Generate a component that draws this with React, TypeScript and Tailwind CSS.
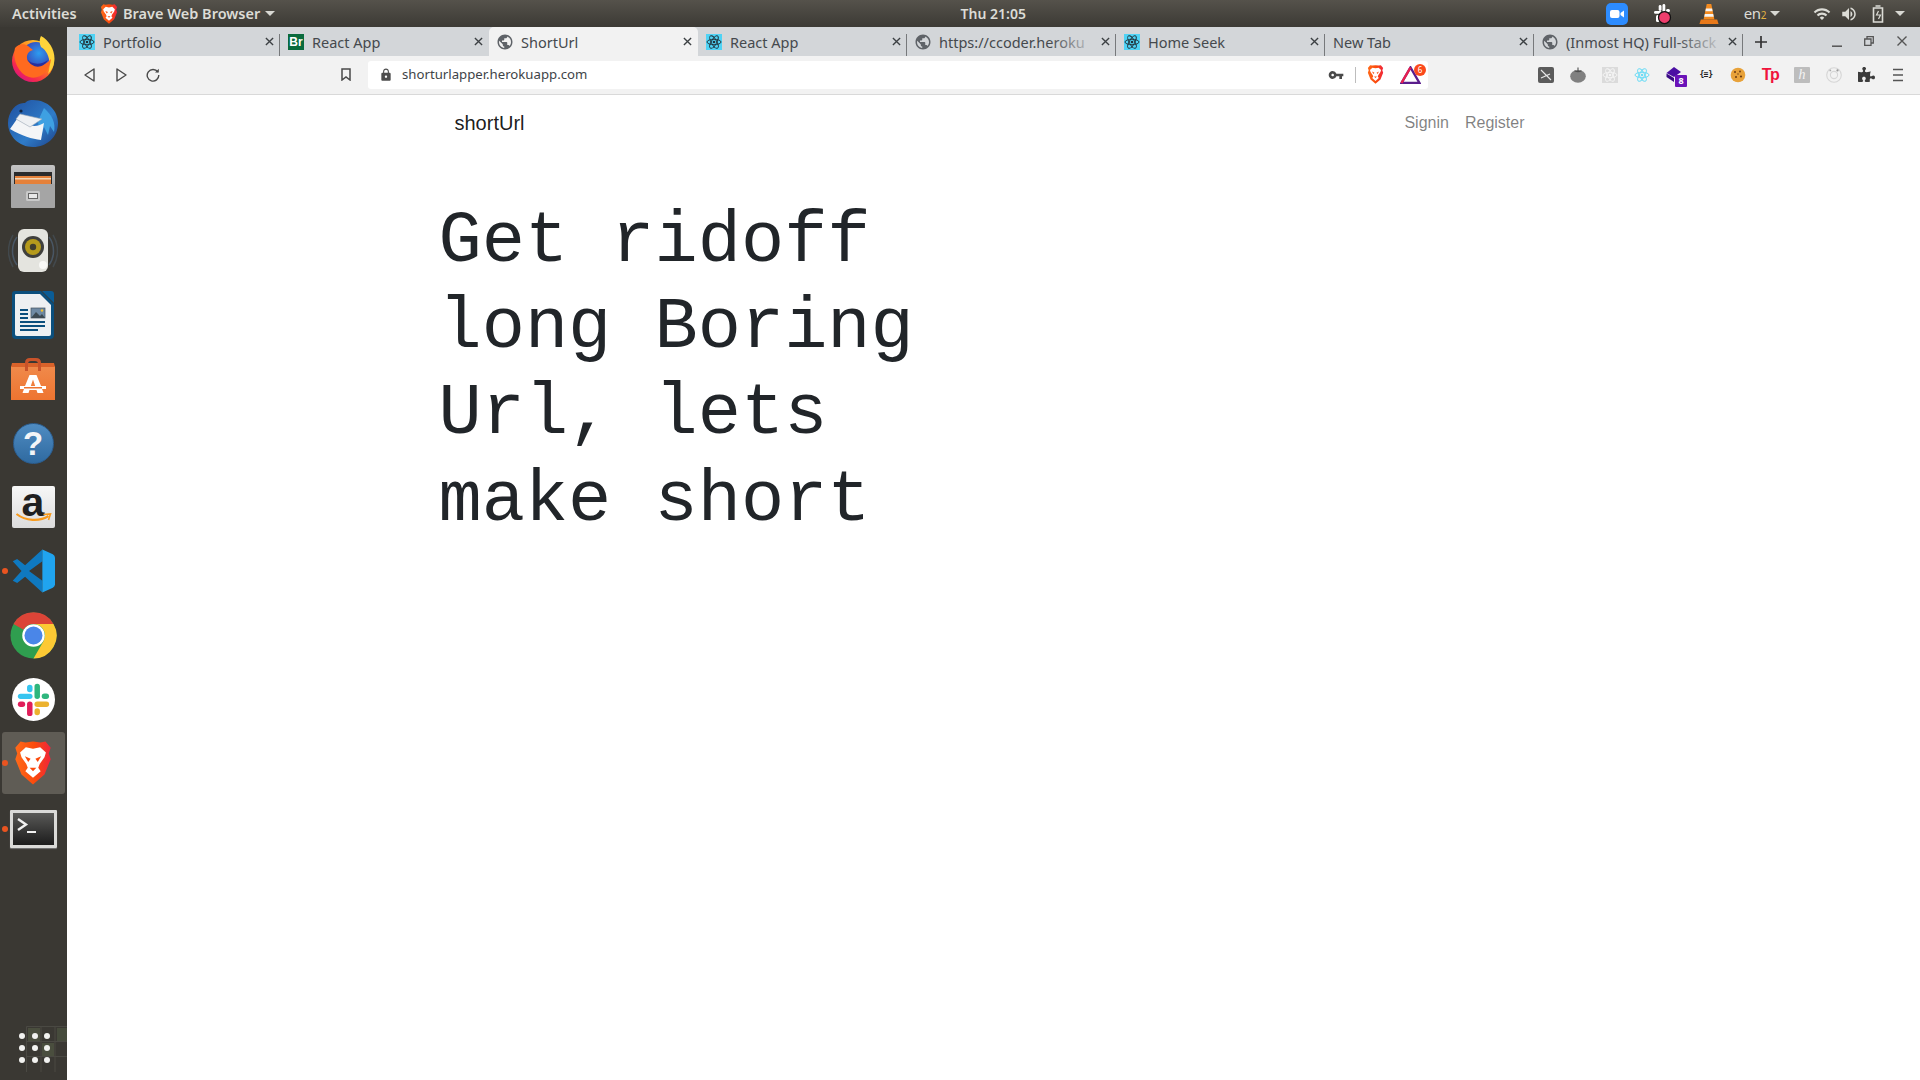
import React from "react";
import { FaPuzzlePiece } from "react-icons/fa";
import { MdVpnKey, MdLock, MdPublic, MdWifi, MdVolumeUp } from "react-icons/md";

const uiFont = "font-['Noto_Sans','Open_Sans',sans-serif]";

function BraveLogo({ className }: { className?: string }) {
  return (
    <svg viewBox="0 0 40 46" className={className}>
      <defs>
        <linearGradient id="brv" x1="0" y1="0" x2="1" y2="0">
          <stop offset="0" stopColor="#ff6a1a" />
          <stop offset="0.55" stopColor="#fb4a0c" />
          <stop offset="1" stopColor="#f0243c" />
        </linearGradient>
      </defs>
      <path d="M20 0.5 L28 1.5 L33 0.5 L38.5 7 L36.5 13 L38.5 19 L32 35 L20 45.5 L8 35 L1.5 19 L3.5 13 L1.5 7 L7 0.5 L12 1.5 Z" fill="url(#brv)" />
      <path d="M6.5 12 L12.5 6.5 L20 8 L27.5 6.5 L33.5 12 L32 17 L27 24 L25.5 28 L28 31.5 L20 38.5 L12 31.5 L14.5 28 L13 24 L8 17 Z" fill="#fff" />
      <path d="M11.5 16 L17.5 18.5 L15 22 Z M28.5 16 L22.5 18.5 L25 22 Z M16.5 28 L23.5 28 L20 31.5 Z" fill="#fb4a0c" />
    </svg>
  );
}

function Atom({ color, width = 1, className }: { color: string; width?: number; className?: string }) {
  return (
    <svg viewBox="0 0 16 16" className={className} fill="none" stroke={color} strokeWidth={width}>
      <ellipse cx="8" cy="8" rx="7" ry="2.7" />
      <ellipse cx="8" cy="8" rx="7" ry="2.7" transform="rotate(60 8 8)" />
      <ellipse cx="8" cy="8" rx="7" ry="2.7" transform="rotate(120 8 8)" />
      <circle cx="8" cy="8" r="1.3" fill={color} stroke="none" />
    </svg>
  );
}

function ReactFav() {
  return (
    <span className="flex h-4 w-4 shrink-0 items-center justify-center bg-[#4fd3f5]">
      <Atom color="#20323a" width={0.9} className="h-4 w-4" />
    </span>
  );
}

function BrFav() {
  return (
    <span className="flex h-4 w-4 shrink-0 items-center justify-center bg-[#0a6b3d] font-['Liberation_Sans',sans-serif] text-[12px] leading-none font-bold text-white">
      Br
    </span>
  );
}

function Globe() {
  return <MdPublic className="h-[18px] w-[18px] shrink-0 -ml-px text-[#5f6368]" />;
}

const tabs: { title: string; fav: React.ReactNode; active?: boolean; fade?: boolean; noSep?: boolean }[] = [
  { title: "Portfolio", fav: <ReactFav /> },
  { title: "React App", fav: <BrFav />, noSep: true },
  { title: "ShortUrl", fav: <Globe />, active: true, noSep: true },
  { title: "React App", fav: <ReactFav /> },
  { title: "https://ccoder.heroku", fav: <Globe />, fade: true },
  { title: "Home Seek", fav: <ReactFav /> },
  { title: "New Tab", fav: null },
  { title: "(Inmost HQ) Full-stack", fav: <Globe />, fade: true },
];

function Tab({ title, fav, active, fade, noSep }: (typeof tabs)[number]) {
  return (
    <div className={`relative flex h-full w-[209px] shrink-0 items-center pl-2 ${active ? "rounded-t-[5px] bg-[#f2f2f2]" : ""}`}>
      {fav && <span className="mr-2 flex w-4 shrink-0 items-center justify-center">{fav}</span>}
      <div className={`relative text-[14.5px] leading-[20px] whitespace-nowrap ${fav ? "w-[160px]" : "w-[184px]"} text-[#45494d]`}>
        {title}
        {fade && <span className="absolute top-0 left-[110px] h-full w-[50px] bg-gradient-to-r from-transparent to-[#d3d6d9]" />}
      </div>
      <svg viewBox="0 0 10 10" className="absolute top-[10px] left-[194px] h-[9px] w-[9px]" stroke="#3c4043" strokeWidth="1.5">
        <path d="M1 1 L9 9 M9 1 L1 9" />
      </svg>
      {!noSep && !active && <span className="absolute top-[7px] right-0 h-[22px] w-px bg-[#77797b]" />}
    </div>
  );
}

function Firefox() {
  return (
    <svg viewBox="0 0 46 46" className="h-[46px] w-[46px]">
      <defs>
        <linearGradient id="ffa" x1="0.85" y1="0.1" x2="0.2" y2="0.95">
          <stop offset="0" stopColor="#ffcf2e" />
          <stop offset="0.45" stopColor="#ff7a1f" />
          <stop offset="0.8" stopColor="#f5284f" />
          <stop offset="1" stopColor="#d9157f" />
        </linearGradient>
        <radialGradient id="ffb" cx="0.6" cy="0.4" r="0.7">
          <stop offset="0" stopColor="#2d9cf0" />
          <stop offset="1" stopColor="#3a2ea8" />
        </radialGradient>
      </defs>
      <circle cx="23" cy="25" r="21" fill="url(#ffa)" />
      <circle cx="26" cy="20" r="14" fill="url(#ffb)" />
      <path d="M31 0 C44 7 50 26 38 38 C42 26 38 15 31 11 C29 7 29.5 3 31 0 Z" fill="#ffd43a" />
      <path d="M5 12 C8 8 14 7 18 10 L23 14 C17 15 15 22 19 26 C24 31 34 31 41 23 C40 36 29 44 19 41 C9 38 2 24 5 12 Z" fill="#ff6a1f" />
      <path d="M17 23 C21 29 32 29 38 24 C33 33 22 33 17 23 Z" fill="#2a2f9c" />
    </svg>
  );
}

function Thunderbird() {
  return (
    <svg viewBox="0 0 50 48" className="h-[48px] w-[50px]">
      <defs>
        <linearGradient id="tb" x1="0" y1="0" x2="1" y2="1">
          <stop offset="0" stopColor="#1f4f9e" />
          <stop offset="0.6" stopColor="#2f7cc9" />
          <stop offset="1" stopColor="#1c3f86" />
        </linearGradient>
      </defs>
      <path d="M25 1 C40 1 50 12 50 24 C50 38 39 48 25 48 C11 48 0 37 0 24 C0 12 9 3 17 4 C20 1 22 1 25 1 Z" fill="url(#tb)" />
      <path d="M36 9 C44 16 48 24 46 33 L42 27 L40 36 L36 28 L32 40 L30 22 Z" fill="#3ea0e2" />
      <path d="M9 20 C20 26 26 30 36 24 L33 41 C24 40 14 37 2 30 Z" fill="#f4f5f7" />
      <path d="M12 15 L34 20 L22 28 L8 20 Z" fill="#eef0f3" stroke="#9aa6b4" strokeWidth="0.6" />
      <circle cx="13" cy="12" r="1.6" fill="#10233f" />
    </svg>
  );
}

function FilesIcon() {
  return (
    <svg viewBox="0 0 44 44" className="h-[44px] w-[44px]">
      <defs>
        <linearGradient id="fl" x1="0" y1="0" x2="0" y2="1">
          <stop offset="0" stopColor="#c4c4c4" />
          <stop offset="1" stopColor="#8f8f8f" />
        </linearGradient>
      </defs>
      <rect x="0" y="0" width="44" height="43" rx="2" fill="url(#fl)" />
      <rect x="3" y="7" width="38" height="14" fill="#2b2b2b" />
      <rect x="4" y="11" width="36" height="8" fill="#e5813a" />
      <rect x="4" y="13" width="36" height="1.5" fill="#f3d6b3" />
      <rect x="0" y="19" width="44" height="24" rx="1" fill="#a5a5a5" />
      <rect x="15" y="26" width="14" height="10" rx="1.5" fill="#c9c9c9" />
      <rect x="17" y="28" width="10" height="6" fill="#666" />
      <rect x="18" y="29" width="8" height="4" fill="#e8e8e8" />
    </svg>
  );
}

function RhythmIcon() {
  return (
    <svg viewBox="0 0 50 44" className="h-[44px] w-[50px]">
      <g fill="none" stroke="#56708c" strokeOpacity="0.55" strokeWidth="1.5">
        <path d="M9 8 C3 16 3 28 9 36" />
        <path d="M41 8 C47 16 47 28 41 36" />
        <path d="M5 6 C-1 16 -1 28 5 38" strokeOpacity="0.3" />
        <path d="M45 6 C51 16 51 28 45 38" strokeOpacity="0.3" />
      </g>
      <rect x="10" y="0" width="30" height="43" rx="6" fill="#e4e4df" />
      <circle cx="25" cy="18" r="11" fill="#3f3f3c" />
      <circle cx="25" cy="18" r="8" fill="#b59a1c" />
      <circle cx="25" cy="18" r="3.2" fill="#3f3d2e" />
      <circle cx="35" cy="36" r="4" fill="#f8f8f6" />
    </svg>
  );
}

function WriterIcon() {
  return (
    <svg viewBox="0 0 42 48" className="h-[48px] w-[42px]">
      <path d="M3 0 H29 L42 13 V44 Q42 48 38 48 H4 Q0 48 0 44 V3 Q0 0 3 0 Z" fill="#0b4f7d" />
      <path d="M30 0 H39 Q42 0 42 3 V12 Z" fill="#0a5c96" />
      <path d="M4 3 H28 L39 14 V43 Q39 45 37 45 H5 Q3 45 3 43 V4 Q3 3 4 3 Z" fill="#edf0f2" />
      <rect x="8" y="18" width="8" height="2" fill="#0b4f7d" />
      <rect x="8" y="22" width="8" height="2" fill="#0b4f7d" />
      <rect x="8" y="26" width="8" height="2" fill="#0b4f7d" />
      <rect x="8" y="30" width="25" height="2" fill="#0b4f7d" />
      <rect x="8" y="34" width="25" height="2" fill="#0b4f7d" />
      <rect x="8" y="38" width="18" height="2" fill="#0b4f7d" />
      <rect x="19" y="17" width="14" height="10" fill="#6f8aa3" stroke="#44525e" strokeWidth="0.7" />
      <path d="M19 27 L24 21 L28 25 L30 23 L33 27 Z" fill="#3d4a52" />
      <circle cx="30" cy="19.5" r="1.2" fill="#f1c232" />
    </svg>
  );
}

function SoftwareIcon() {
  return (
    <svg viewBox="0 0 44 44" className="h-[44px] w-[44px]">
      <defs>
        <linearGradient id="sw" x1="0" y1="0" x2="0" y2="1">
          <stop offset="0" stopColor="#f08a4b" />
          <stop offset="1" stopColor="#ee7430" />
        </linearGradient>
      </defs>
      <path d="M0 9 H44 V43 H0 Z" fill="url(#sw)" />
      <path d="M1 6 H43 L44 10 H0 Z" fill="#d9622a" />
      <path d="M14 14 V6 Q14 1 19 1 H25 Q30 1 30 6 V14 H27 V7 Q27 4 24 4 H20 Q17 4 17 7 V14 Z" fill="#c9532a" />
      <path fillRule="evenodd" fill="#fff" d="M18.5 18 H25.5 L30 29 H35 V32 H31 L32.5 36 H26.5 L25.5 33 H18.5 L17.5 36 H11.5 L13 32 H9 V29 H14 Z M22 22.5 L19.8 29 H24.2 Z" />
      <rect x="13" y="30" width="18" height="1.5" fill="#ee7430" />
    </svg>
  );
}

function HelpIcon() {
  return (
    <div className="flex h-[41px] w-[41px] items-center justify-center rounded-full border border-[#2b5d8f] bg-gradient-to-b from-[#4f8cc2] to-[#2f6aa0] font-['Liberation_Sans',sans-serif] text-[33px] leading-none font-bold text-[#f2f5f8]">
      ?
    </div>
  );
}

function AmazonIcon() {
  return (
    <div className="relative flex h-[42px] w-[43px] justify-center rounded-[2px] bg-gradient-to-b from-[#f7f7f7] to-[#dcdcdc] font-['Liberation_Sans',sans-serif] text-[41px] leading-[32px] font-bold text-[#1f1f1f]">
      a
      <svg viewBox="0 0 36 10" className="absolute top-[27px] left-[3px] h-[10px] w-[37px]">
        <path d="M1 1 C10 8 24 9 33 3" fill="none" stroke="#f79a1c" strokeWidth="2.2" />
        <path d="M28 1.5 L35 1 L33 7" fill="none" stroke="#f79a1c" strokeWidth="1.6" />
      </svg>
    </div>
  );
}

function VSCode() {
  return (
    <svg viewBox="0 0 100 100" className="h-[44px] w-[44px]">
      <path d="M71.3 1 L32 37 L14 23 L4 28 L24 50 L4 72 L14 77 L32 63 L71.3 99 L71.3 72 L41 50 L71.3 28 Z" fill="#0f79c0" />
      <path d="M71.3 1 L95 12 Q100 15 100 20 V80 Q100 85 95 88 L71.3 99 Z" fill="#20a4ef" />
    </svg>
  );
}

function Chrome() {
  return (
    <svg viewBox="0 0 48 48" className="h-[47px] w-[47px]">
      <circle cx="24" cy="24" r="23.5" fill="#2f9e4f" />
      <path d="M3.6 12.2 A23.5 23.5 0 0 1 44.4 12.2 L24 12.2 A11.8 11.8 0 0 0 13.8 18 Z" fill="#db4437" />
      <path d="M44.4 12.2 A23.5 23.5 0 0 1 24 47.5 L34.2 29.9 A11.8 11.8 0 0 0 24 12.2 Z" fill="#fcc934" />
      <circle cx="24" cy="24" r="11.5" fill="#fff" />
      <circle cx="24" cy="24" r="9.2" fill="#4a86e8" />
    </svg>
  );
}

function Slack() {
  return (
    <svg viewBox="0 0 44 44" className="h-[43px] w-[43px]">
      <circle cx="22" cy="22" r="22" fill="#fff" />
      <rect x="6" y="16" width="15" height="5.6" rx="2.8" fill="#36c5f0" />
      <rect x="15.4" y="7" width="5.6" height="7.5" rx="2.8" fill="#36c5f0" />
      <rect x="23" y="6" width="5.6" height="15.6" rx="2.8" fill="#2eb67d" />
      <rect x="30.4" y="15.8" width="7.5" height="5.8" rx="2.8" fill="#2eb67d" />
      <rect x="23" y="24" width="15" height="5.6" rx="2.8" fill="#ecb22e" />
      <rect x="23" y="31" width="5.6" height="7" rx="2.8" fill="#ecb22e" />
      <rect x="15.4" y="24" width="5.6" height="15" rx="2.8" fill="#e01e5a" />
      <rect x="6" y="24" width="7.5" height="5.6" rx="2.8" fill="#e01e5a" />
    </svg>
  );
}

function Terminal() {
  return (
    <div className="flex h-[38px] w-[47px] rounded-[1px] border-[3px] border-[#dadad8] bg-gradient-to-b from-[#5a5a58] to-[#1d1d1d] p-[2px] shadow-[0_1px_1px_#777]">
      <svg viewBox="0 0 37 28" className="h-full w-full">
        <path d="M3 4 L11 9.5 L3 15" fill="none" stroke="#f1f1f1" strokeWidth="2.4" />
        <rect x="12" y="16" width="9" height="2" fill="#f1f1f1" />
      </svg>
    </div>
  );
}

function DockItem({ children, running, active, mt }: { children: React.ReactNode; running?: boolean; active?: boolean; mt?: boolean }) {
  return (
    <div className={`relative flex h-16 w-full shrink-0 items-center justify-center pr-[1px] ${mt ? "mt-[2px]" : ""}`}>
      {active && <span className="absolute top-px left-[2px] h-[62px] w-[63px] rounded-[3px] bg-[#5f5c55]" />}
      {running && <span className="absolute top-[29px] left-[2px] h-[6px] w-[6px] rounded-full bg-[#e95420]" />}
      <span className="relative flex items-center justify-center">{children}</span>
    </div>
  );
}

function Dock() {
  return (
    <aside className="flex h-full w-[67px] shrink-0 flex-col bg-[#3a3833]">
      <DockItem><Firefox /></DockItem>
      <DockItem><Thunderbird /></DockItem>
      <DockItem><FilesIcon /></DockItem>
      <DockItem><RhythmIcon /></DockItem>
      <DockItem><WriterIcon /></DockItem>
      <DockItem><SoftwareIcon /></DockItem>
      <DockItem><HelpIcon /></DockItem>
      <DockItem><AmazonIcon /></DockItem>
      <DockItem running><VSCode /></DockItem>
      <DockItem><Chrome /></DockItem>
      <DockItem><Slack /></DockItem>
      <DockItem running active><BraveLogo className="h-[44px] w-[40px]" /></DockItem>
      <DockItem running mt><Terminal /></DockItem>
      <div className="relative mt-auto mb-[4px] h-[64px]">
        <svg viewBox="0 0 41 46" className="absolute top-[14px] left-[26px] h-[46px] w-[41px]" fill="none" stroke="#4a4943" strokeWidth="1">
          <path d="M0.5 46 V0.5 H41 M0.5 15.5 H41 M0.5 30.5 H41 M15 0.5 V46 M29 0.5 V46" />
          <rect x="2" y="2" width="12" height="13" fill="#4a4e3e" stroke="none" />
          <rect x="31" y="2" width="10" height="13" fill="#464b3c" stroke="none" />
          <rect x="16" y="17" width="12" height="13" fill="#4a4e3e" stroke="none" />
        </svg>
        <div className="absolute top-[21px] left-[19px] grid grid-cols-3 gap-x-[6.5px] gap-y-[6px]">
          {Array.from({ length: 9 }).map((_, i) => (
            <span key={i} className="h-[6px] w-[6px] rounded-full bg-[#f2f2f0]" />
          ))}
        </div>
      </div>
    </aside>
  );
}

function Caret({ className }: { className?: string }) {
  return <span className={`h-0 w-0 border-x-[5px] border-t-[5px] border-x-transparent border-t-[#d8d8d3] ${className ?? ""}`} />;
}

function TopBar() {
  return (
    <header className={`flex h-[27px] shrink-0 items-center bg-gradient-to-b from-[#55524b] to-[#3c3a35] text-[14.5px] font-semibold text-[#dcdcd6] ${uiFont}`}>
      <span className="ml-[12px] w-[88px]">Activities</span>
      <BraveLogo className="h-[20px] w-[18px]" />
      <span className="ml-[5px]">Brave Web Browser</span>
      <Caret className="ml-[5px]" />
      <div className="ml-[683px] w-[70px] text-center text-[14px] whitespace-nowrap">Thu 21:05</div>
      <div className="ml-auto flex items-center">
        <div className="flex h-[22px] w-[22px] items-center justify-center rounded-[5px] bg-[#2d8cff]">
          <svg viewBox="0 0 14 10" className="h-[10px] w-[14px]" fill="#fff">
            <rect x="0" y="1" width="9.5" height="8" rx="2" />
            <path d="M10.5 4 L14 1.5 V8.5 L10.5 6 Z" />
          </svg>
        </div>
        <svg viewBox="0 0 44 44" className="ml-[23px] h-[22px] w-[22px]">
          <rect x="6" y="16" width="15" height="5.6" rx="2.8" fill="#fff" />
          <rect x="15.4" y="4" width="5.6" height="12" rx="2.8" fill="#fff" />
          <rect x="23" y="2" width="5.6" height="17" rx="2.8" fill="#fff" />
          <rect x="30" y="12" width="8" height="6" rx="3" fill="#fff" />
          <rect x="10" y="24" width="7" height="14" rx="3" fill="#fff" />
          <circle cx="27" cy="29" r="12" fill="#ef3e6d" stroke="#111" strokeWidth="2.5" />
        </svg>
        <svg viewBox="0 0 22 24" className="ml-[26px] h-[24px] w-[20px]">
          <path d="M8.5 1 H13.5 L17 18 H5 Z" fill="#f48b1f" />
          <path d="M7.6 6 H14.4 L15 9 H7 Z M6.4 12 H15.6 L16.2 15 H5.8 Z" fill="#f4f4f4" />
          <path d="M2 18 H20 L21.5 23 H0.5 Z" fill="#e8791a" />
        </svg>
        <span className="ml-[25px] text-[15px] leading-none font-normal tracking-tight">
          en<span className="text-[10px] text-[#e3b341]">2</span>
        </span>
        <Caret className="ml-[4px]" />
        <MdWifi className="ml-[33px] h-[18px] w-[18px]" />
        <MdVolumeUp className="ml-[9px] h-[18px] w-[18px]" />
        <svg viewBox="0 0 14 18" className="ml-[13px] h-[18px] w-[15px]" fill="none" stroke="#dcdcd6" strokeWidth="1.6">
          <path d="M4 1 H9 M2 3 H11 V17 H2 Z" />
          <path d="M7 6 L5 10 H9 L7 14" strokeWidth="1.2" />
        </svg>
        <Caret className="mr-[15px] ml-[9px]" />
      </div>
    </header>
  );
}

function TabStrip() {
  return (
    <div className={`flex h-[29px] shrink-0 items-stretch bg-[#d3d6d9] pl-[4px] ${uiFont}`}>
      {tabs.map((t, i) => (
        <Tab key={i} {...t} />
      ))}
      <svg viewBox="0 0 12 12" className="mt-[9px] ml-[12px] h-[12px] w-[12px]" stroke="#333" strokeWidth="1.7">
        <path d="M6 0 V12 M0 6 H12" />
      </svg>
      <svg viewBox="0 0 10 10" className="mt-[10px] ml-[65px] h-[10px] w-[10px]" stroke="#555" strokeWidth="1.5">
        <path d="M0 9.2 H10" />
      </svg>
      <svg viewBox="0 0 10 10" className="mt-[9px] ml-[22px] h-[10px] w-[10px]" fill="none" stroke="#555" strokeWidth="1.3">
        <path d="M0.7 3 H7 V9.3 H0.7 Z M3 3 V0.7 H9.3 V7 H7" />
      </svg>
      <svg viewBox="0 0 10 10" className="mt-[9px] ml-[23px] h-[10px] w-[10px]" stroke="#555" strokeWidth="1.4">
        <path d="M0.5 0.5 L9.5 9.5 M9.5 0.5 L0.5 9.5" />
      </svg>
    </div>
  );
}

function Ext({ children }: { children: React.ReactNode }) {
  return <span className="flex h-4 w-8 items-center justify-center">{children}</span>;
}

function Extensions() {
  return (
    <div className="flex items-center">
      <Ext>
        <svg viewBox="0 0 16 16" className="h-4 w-4">
          <rect width="16" height="16" rx="2" fill="#5b5b5b" />
          <path d="M3 3 L13 13 M3 11 L12 7" stroke="#e8e8e8" strokeWidth="1.1" />
        </svg>
      </Ext>
      <Ext>
        <svg viewBox="0 0 16 16" className="h-4 w-4">
          <ellipse cx="8" cy="9.3" rx="7.8" ry="6.4" fill="#808080" />
          <path d="M8 0.5 V4.5 M4.5 3.8 Q8 5.5 11.5 3.8" stroke="#4f4f4f" strokeWidth="1.1" fill="none" />
        </svg>
      </Ext>
      <Ext>
        <span className="flex h-4 w-4 items-center justify-center bg-[#dbdbdb]">
          <Atom color="#f5f5f5" width={0.9} className="h-4 w-4" />
        </span>
      </Ext>
      <Ext><Atom color="#6fdcf5" width={1} className="h-4 w-4" /></Ext>
      <Ext>
        <span className="relative h-4 w-4">
          <svg viewBox="0 0 16 16" className="h-4 w-4">
            <path d="M8 0 L15 5 L8 10 L0.5 6 Z" fill="#4b0fa3" />
            <path d="M0.5 6.5 L8 11 V15 L0.5 10 Z" fill="#3a0b85" />
          </svg>
          <span className={`absolute top-[8px] left-[9px] flex h-[12px] w-[12px] items-center justify-center rounded-[1px] bg-[#6a12b8] text-[9px] leading-none font-bold text-white ${uiFont}`}>8</span>
        </span>
      </Ext>
      <Ext>
        <span className="font-['DejaVu_Sans_Mono',monospace] text-[8px] leading-none font-bold tracking-[-0.5px] text-[#222]">{"{≡}"}</span>
      </Ext>
      <Ext>
        <svg viewBox="0 0 16 16" className="h-4 w-4">
          <circle cx="8" cy="8" r="7.3" fill="#e8a23a" />
          <g fill="#6b3a14">
            <circle cx="5" cy="5" r="1" /><circle cx="10" cy="4.5" r="0.9" /><circle cx="11" cy="9.5" r="1.1" />
            <circle cx="6" cy="10" r="1" /><circle cx="8" cy="7" r="0.7" />
          </g>
        </svg>
      </Ext>
      <Ext>
        <span className="font-['Liberation_Sans',sans-serif] text-[16px] leading-none font-bold tracking-[-1.5px] text-[#f0143c]">Tp</span>
      </Ext>
      <Ext>
        <span className="flex h-4 w-4 items-center justify-center rounded-[1px] bg-[#bdbdbd] font-['Liberation_Serif',serif] text-[14px] leading-none text-[#f4f4f4] italic">h</span>
      </Ext>
      <Ext>
        <svg viewBox="0 0 16 16" className="h-4 w-4" fill="none" stroke="#d6d6d6" strokeWidth="1.1">
          <circle cx="8" cy="8" r="7.3" />
          <circle cx="8" cy="8" r="3.6" />
          <circle cx="11.5" cy="3.4" r="1.1" fill="#999" stroke="none" />
          <circle cx="4.3" cy="3.4" r="0.9" fill="#aaa" stroke="none" />
        </svg>
      </Ext>
      <Ext><FaPuzzlePiece className="h-[17px] w-[17px] text-[#3c3c3c]" /></Ext>
      <Ext>
        <svg viewBox="0 0 10 14" className="h-[14px] w-[10px]" stroke="#555" strokeWidth="1.6">
          <path d="M0 1.5 H10 M0 7 H10 M0 12.5 H10" />
        </svg>
      </Ext>
    </div>
  );
}

function Toolbar() {
  return (
    <div className={`flex h-[39px] shrink-0 items-center border-b border-[#d9d9d9] bg-[#f2f2f2] pb-[1px] ${uiFont}`}>
      <svg viewBox="0 0 11 14" className="ml-[17px] h-[14px] w-[11px]" fill="none" stroke="#4a4a4a" strokeWidth="1.4" strokeLinejoin="round">
        <path d="M10 1 V13 L1 7 Z" />
      </svg>
      <svg viewBox="0 0 11 14" className="ml-[21px] h-[14px] w-[11px]" fill="none" stroke="#4a4a4a" strokeWidth="1.4" strokeLinejoin="round">
        <path d="M1 1 V13 L10 7 Z" />
      </svg>
      <svg viewBox="0 0 14 14" className="ml-[19px] h-[14px] w-[14px]" fill="none" stroke="#4a4a4a" strokeWidth="1.4">
        <path d="M11.8 4 A5.8 5.8 0 1 0 12.8 7" />
        <path d="M12.8 0.8 V4.6 H9" fill="#4a4a4a" stroke="none" />
      </svg>
      <svg viewBox="0 0 10 13" className="ml-[181px] h-[13px] w-[10px]" fill="none" stroke="#4a4a4a" strokeWidth="1.5">
        <path d="M1 1 H9 V12 L5 9 L1 12 Z" />
      </svg>
      <div className="ml-[17px] flex h-[28px] w-[1060px] items-center rounded-[3px] bg-white">
        <MdLock className="ml-[11px] h-[14px] w-[14px] text-[#4d4d4d]" />
        <span className="ml-[9px] text-[13.2px] text-[#3e4347]">shorturlapper.herokuapp.com</span>
        <MdVpnKey className="mr-[11px] ml-auto h-[16px] w-[16px] text-[#4a4a4a]" />
        <span className="h-[16px] w-px bg-[#bdbdbd]" />
        <BraveLogo className="ml-[11px] h-[19px] w-[17px]" />
        <span className="relative mr-[7px] ml-[16px] h-[18px] w-[21px]">
          <svg viewBox="0 0 21 18" className="h-[18px] w-[21px]" fill="none">
            <path d="M10.5 1.5 L19.5 17 H1.5 Z" stroke="#5a1d8c" strokeWidth="2.4" />
            <path d="M10.5 1.5 L1.5 17" stroke="#e8204f" strokeWidth="2.4" />
          </svg>
          <span className="absolute -top-[2px] -right-[5px] flex h-[12px] w-[12px] items-center justify-center rounded-full bg-[#fb4a1b] text-[8px] leading-none text-white">6</span>
        </span>
      </div>
      <div className="ml-auto pr-[6px]"><Extensions /></div>
    </div>
  );
}

function Page() {
  return (
    <main className="min-h-0 flex-1 bg-white">
      <div className="mx-auto w-[1140px]">
        <nav className="flex h-[56px] items-center px-[31px] font-['Liberation_Sans',sans-serif]">
          <a className="text-[20px] text-black/90">shortUrl</a>
          <div className="ml-auto flex gap-4 pr-[8px] text-[16px] text-black/50">
            <a>Signin</a>
            <a>Register</a>
          </div>
        </nav>
        <div className="px-[15px] pt-[47.5px]">
          <h1 className="w-[540px] font-['Liberation_Mono',monospace] text-[72px] leading-[86.4px] font-normal text-[#212529]">
            Get ridoff long Boring Url, lets make short
          </h1>
        </div>
      </div>
    </main>
  );
}

export default function App() {
  return (
    <div className="flex h-[1080px] w-[1920px] flex-col overflow-hidden">
      <TopBar />
      <div className="flex min-h-0 flex-1">
        <Dock />
        <div className="flex min-w-0 flex-1 flex-col">
          <TabStrip />
          <Toolbar />
          <Page />
        </div>
      </div>
    </div>
  );
}
